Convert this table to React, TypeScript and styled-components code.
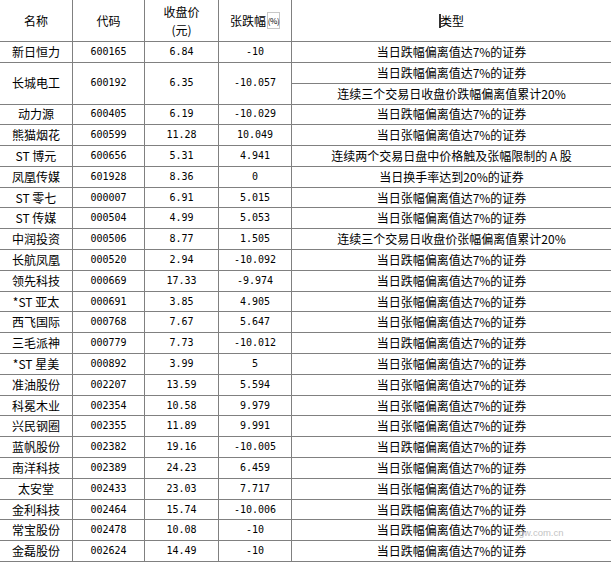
import React from 'react';
import styled, { createGlobalStyle } from 'styled-components';

const GlobalStyle = createGlobalStyle`
  html, body {
    margin: 0;
    padding: 0;
    background: #ffffff;
  }
  body {
    font-family: 'Noto Sans CJK SC', 'Noto Sans', sans-serif;
    font-size: 12px;
    color: #000000;
  }
`;

type Row = {
  name: string;
  code: string;
  price: string;
  change: string;
  types: string[];
};

const UP = '当日张幅偏离值达7%的证券';
const DOWN = '当日跌幅偏离值达7%的证券';

const rows: Row[] = [
  { name: '新日恒力', code: '600165', price: '6.84', change: '-10', types: [DOWN] },
  {
    name: '长城电工',
    code: '600192',
    price: '6.35',
    change: '-10.057',
    types: [DOWN, '连续三个交易日收盘价跌幅偏离值累计20%'],
  },
  { name: '动力源', code: '600405', price: '6.19', change: '-10.029', types: [DOWN] },
  { name: '熊猫烟花', code: '600599', price: '11.28', change: '10.049', types: [UP] },
  {
    name: 'ST 博元',
    code: '600656',
    price: '5.31',
    change: '4.941',
    types: ['连续两个交易日盘中价格触及张幅限制的 A 股'],
  },
  { name: '凤凰传媒', code: '601928', price: '8.36', change: '0', types: ['当日换手率达到20%的证券'] },
  { name: 'ST 零七', code: '000007', price: '6.91', change: '5.015', types: [UP] },
  { name: 'ST 传媒', code: '000504', price: '4.99', change: '5.053', types: [UP] },
  {
    name: '中润投资',
    code: '000506',
    price: '8.77',
    change: '1.505',
    types: ['连续三个交易日收盘价张幅偏离值累计20%'],
  },
  { name: '长航凤凰', code: '000520', price: '2.94', change: '-10.092', types: [DOWN] },
  { name: '领先科技', code: '000669', price: '17.33', change: '-9.974', types: [DOWN] },
  { name: '*ST 亚太', code: '000691', price: '3.85', change: '4.905', types: [UP] },
  { name: '西飞国际', code: '000768', price: '7.67', change: '5.647', types: [UP] },
  { name: '三毛派神', code: '000779', price: '7.73', change: '-10.012', types: [DOWN] },
  { name: '*ST 星美', code: '000892', price: '3.99', change: '5', types: [UP] },
  { name: '准油股份', code: '002207', price: '13.59', change: '5.594', types: [UP] },
  { name: '科冕木业', code: '002354', price: '10.58', change: '9.979', types: [UP] },
  { name: '兴民钢圈', code: '002355', price: '11.89', change: '9.991', types: [UP] },
  { name: '蓝帆股份', code: '002382', price: '19.16', change: '-10.005', types: [DOWN] },
  { name: '南洋科技', code: '002389', price: '24.23', change: '6.459', types: [UP] },
  { name: '太安堂', code: '002433', price: '23.03', change: '7.717', types: [UP] },
  { name: '金利科技', code: '002464', price: '15.74', change: '-10.006', types: [DOWN] },
  { name: '常宝股份', code: '002478', price: '10.08', change: '-10', types: [DOWN] },
  { name: '金磊股份', code: '002624', price: '14.49', change: '-10', types: [DOWN] },
];

const App = () => {
  return (
    <>
      <GlobalStyle />
      <Page>
        <Table>
          <Head>名称</Head>
          <Head>代码</Head>
          <Head>
            <Stack>
              <span>收盘价</span>
              <span>(元)</span>
            </Stack>
          </Head>
          <Head>
            张跌幅<Unit>(%)</Unit>
          </Head>
          <Head last>
            <Caret />
            类型
          </Head>

          {rows.map((row, i) => {
            const span = row.types.length;
            return (
              <React.Fragment key={`row_${row.code}_${i}`}>
                <Cell span={span}>{row.name}</Cell>
                <Num span={span}>{row.code}</Num>
                <Num span={span}>{row.price}</Num>
                <Num span={span}>{row.change}</Num>
                {row.types.map((t, k) => (
                  <Cell last key={`type_${row.code}_${k}`}>
                    {t}
                  </Cell>
                ))}
              </React.Fragment>
            );
          })}
        </Table>
        <Watermark>tgw.com.cn</Watermark>
      </Page>
    </>
  );
};

export default App;

const Page = styled.div`
  position: relative;
  width: 611px;
  height: 564px;
  overflow: hidden;
  background: #ffffff;
`;

const Table = styled.div`
  display: grid;
  grid-template-columns: 73px 72px 74px 73px 319px;
  grid-template-rows: 42px 21px 21px 20.5px repeat(22, 20.8px);
`;

const Cell = styled.div<{ span?: number; last?: boolean }>`
  display: flex;
  align-items: center;
  justify-content: center;
  box-sizing: border-box;
  border-bottom: 1px solid #808080;
  border-right: ${({ last }) => (last ? 'none' : '1px solid #808080')};
  grid-row: span ${({ span }) => span || 1};
  white-space: nowrap;
  line-height: 14px;
  font-size: 12px;
`;

const Num = styled(Cell)`
  font-family: 'DejaVu Sans Mono', 'Liberation Mono', monospace;
  font-size: 10px;
`;

const Head = styled(Cell)`
  font-size: 12px;
`;

const Stack = styled.div`
  display: flex;
  flex-direction: column;
  align-items: center;
  line-height: 18px;
`;

const Unit = styled.span`
  display: inline-flex;
  align-items: center;
  justify-content: center;
  box-sizing: border-box;
  width: 13px;
  height: 17px;
  border: 1px solid #c8c8c8;
  font-size: 8px;
  letter-spacing: -0.5px;
  margin-left: 1px;
`;

const Caret = styled.span`
  display: inline-block;
  width: 2px;
  height: 14px;
  background: #333333;
  margin-right: -1px;
`;

const Watermark = styled.div`
  position: absolute;
  left: 516px;
  top: 527px;
  font-family: 'Liberation Sans', Arial, sans-serif;
  font-size: 9.5px;
  color: #c4c4c4;
  pointer-events: none;
`;
